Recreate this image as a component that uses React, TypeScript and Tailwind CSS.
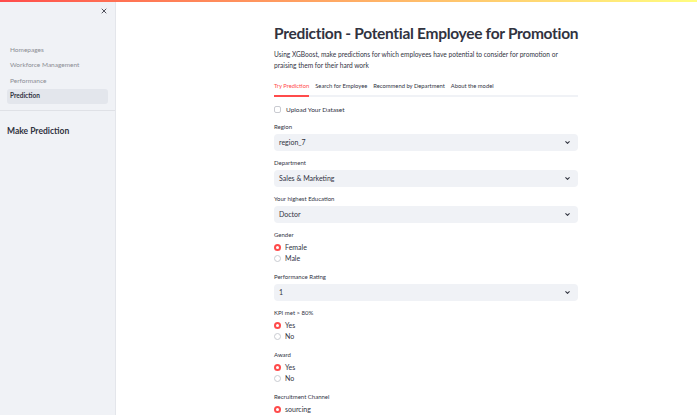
import { ChevronDown, X } from "lucide-react";

const font = { fontFamily: 'Lato, "Noto Sans", sans-serif' };

function Select({ label, value }: { label: string; value: string }) {
  return (
    <div className="mt-[8px]">
      <p className="text-[6px] text-[#31333f] leading-[8px]">{label}</p>
      <div className="mt-[3px] h-[17px] rounded-[4px] bg-[#f0f2f6] flex items-center justify-between pl-[5px] pr-[7px]">
        <span className="text-[7px] text-[#31333f]">{value}</span>
        <ChevronDown size={7} strokeWidth={3.5} className="text-[#31333f]" />
      </div>
    </div>
  );
}

function Radio({ label, options }: { label: string; options: string[] }) {
  return (
    <div className="mt-[8px] pb-[1.5px]">
      <p className="text-[6px] text-[#31333f] leading-[8px]">{label}</p>
      <div className="mt-[4.5px] flex flex-col gap-[2px]">
        {options.map((o, i) => (
          <div key={o} className="flex items-center gap-[4px] h-[9px]">
            {i === 0 ? (
              <span className="w-[7px] h-[7px] rounded-full bg-[#ff4b4b] flex items-center justify-center">
                <span className="w-[3px] h-[3px] rounded-full bg-white" />
              </span>
            ) : (
              <span className="w-[7px] h-[7px] rounded-full border border-[#c9cbd1] bg-white" />
            )}
            <span className="text-[7px] text-[#31333f]">{o}</span>
          </div>
        ))}
      </div>
    </div>
  );
}

export default function App() {
  return (
    <div className="w-[697px] h-[415px] overflow-hidden relative bg-white flex" style={font}>
      <div className="absolute top-0 left-0 right-0 h-[2px] bg-gradient-to-r from-[#ff4b4b] to-[#fffd80] z-10" />
      {/* sidebar */}
      <div className="w-[116px] h-full bg-[#f0f2f6] border-r border-[#e4e6eb] shrink-0">
        <div className="flex justify-end pr-[7px] pt-[7px]">
          <X size={8} strokeWidth={2.5} className="text-[#31333f]" />
        </div>
        <div className="mt-[27px] px-[7px] flex flex-col">
          {["Homepages", "Workforce Management", "Performance"].map((n) => (
            <div key={n} className="h-[15.5px] px-[3px] flex items-center text-[6.5px] text-[#8b8d94]">{n}</div>
          ))}
          <div className="h-[15.5px] px-[3px] flex items-center text-[6.5px] font-bold text-[#31333f] bg-[#e3e6ec] rounded-[3px]">Prediction</div>
        </div>
        <div className="mt-[6px] border-t border-[#dfe1e6]" />
        <p className="mt-[14px] pl-[7px] text-[8.5px] font-bold text-[#31333f]">Make Prediction</p>
      </div>
      {/* main */}
      <div className="flex-1 pl-[158px]">
        <div className="w-[304px] pt-[21px]">
          <h1 className="text-[15.5px] font-bold text-[#31333f] leading-[24px] tracking-[-0.3px] whitespace-nowrap">Prediction - Potential Employee for Promotion</h1>
          <p className="mt-[4px] text-[6.6px] leading-[10.5px] text-[#31333f]">Using XGBoost, make predictions for which employees have potential to consider for promotion or praising them for their hard work</p>
          <div className="mt-[12px] flex gap-[6px] border-b-[2px] border-[#f0f2f6] text-[5.8px] text-[#31333f]">
            <span className="pb-[4px] text-[#ff4b4b] border-b-[2px] border-[#ff4b4b] mb-[-2px]">Try Prediction</span>
            <span className="pb-[4px]">Search for Employee</span>
            <span className="pb-[4px]">Recommend by Department</span>
            <span className="pb-[4px]">About the model</span>
          </div>
          <div className="mt-[8px] flex items-center gap-[5px] h-[10px]">
            <span className="w-[7px] h-[7px] rounded-[2px] border border-[#c9cbd1] bg-white" />
            <span className="text-[6.5px] text-[#31333f]">Upload Your Dataset</span>
          </div>
          <Select label="Region" value="region_7" />
          <Select label="Department" value="Sales & Marketing" />
          <Select label="Your highest Education" value="Doctor" />
          <Radio label="Gender" options={["Female", "Male"]} />
          <Select label="Performance Rating" value="1" />
          <Radio label="KPI met > 80%" options={["Yes", "No"]} />
          <Radio label="Award" options={["Yes", "No"]} />
          <Radio label="Recruitment Channel" options={["sourcing"]} />
        </div>
      </div>
    </div>
  );
}
